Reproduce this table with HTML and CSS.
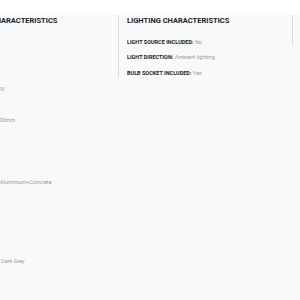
FILE: index.html
```html
<!DOCTYPE html>
<html>
<head>
<meta charset="utf-8">
<link rel="stylesheet" href="styles.css">
</head>
<body>
<div class="topbar"></div>
<div class="specs">
  <section class="col">
    <h3 class="col-title">PRODUCT CHARACTERISTICS</h3>
    <ul class="list">
      <li><b>TYPE:</b> Pendant</li>
      <li><b>SKU:</b> 4021</li>
      <li><b>IP:</b> 20</li>
      <li><b>VOLTAGE:</b> 220-240V</li>
      <li><b>CE:</b> Yes</li>
      <li><b>DIMENSIONS:</b> Ø 300mm</li>
      <li><b>BASE:</b> E27</li>
      <li><b>WATT:</b> 60W</li>
      <li><b>CLASS:</b> I</li>
      <li><b>BODY MATERIAL:</b> Aluminium+Concrete</li>
      <li><b>DIM:</b> No</li>
      <li><b>CORD:</b> 1m</li>
      <li><b>KG:</b> 1.2</li>
      <li><b>LED:</b> No</li>
      <li><b>FITTING COLOUR:</b> Dark Grey</li>
    </ul>
  </section>
  <section class="col">
    <h3 class="col-title">LIGHTING CHARACTERISTICS</h3>
    <ul class="list">
      <li><b>LIGHT SOURCE INCLUDED:</b> No</li>
      <li><b>LIGHT DIRECTION:</b> Ambient lighting</li>
      <li><b>BULB SOCKET INCLUDED:</b> Yes</li>
    </ul>
  </section>
  <section class="col">
    <h3 class="col-title">OTHER</h3>
    <ul class="list">
      <li><b>WARRANTY:</b> 2 years</li>
    </ul>
  </section>
</div>
</body>
</html>
```
FILE: styles.css
```css
html, body {
  margin: 0;
  padding: 0;
  overflow: hidden;
}
body {
  background: #f8f9fb;
  font-family: Roboto, "Liberation Sans", sans-serif;
  width: 300px;
  height: 300px;
}
.topbar {
  height: 15px;
  background: #ffffff;
}
.specs {
  display: grid;
  grid-template-columns: 172px 174px 174px;
  align-items: start;
  margin-left: -54px;
  width: 520px;
}
.col {
  border-left: 1px solid #dcdde0;
  padding-left: 8px;
}
.col-title {
  margin: 0 0 10.6px;
  font-size: 7.5px;
  line-height: 12px;
  font-weight: 700;
  color: #222;
  white-space: nowrap;
}
.list {
  list-style: none;
  margin: 0;
  padding: 0;
  display: flex;
  flex-direction: column;
  gap: 7.65px;
}
.list li {
  font-size: 5.5px;
  line-height: 8px;
  color: #999;
  white-space: nowrap;
}
.list b {
  color: #222;
  font-weight: 700;
}
```
